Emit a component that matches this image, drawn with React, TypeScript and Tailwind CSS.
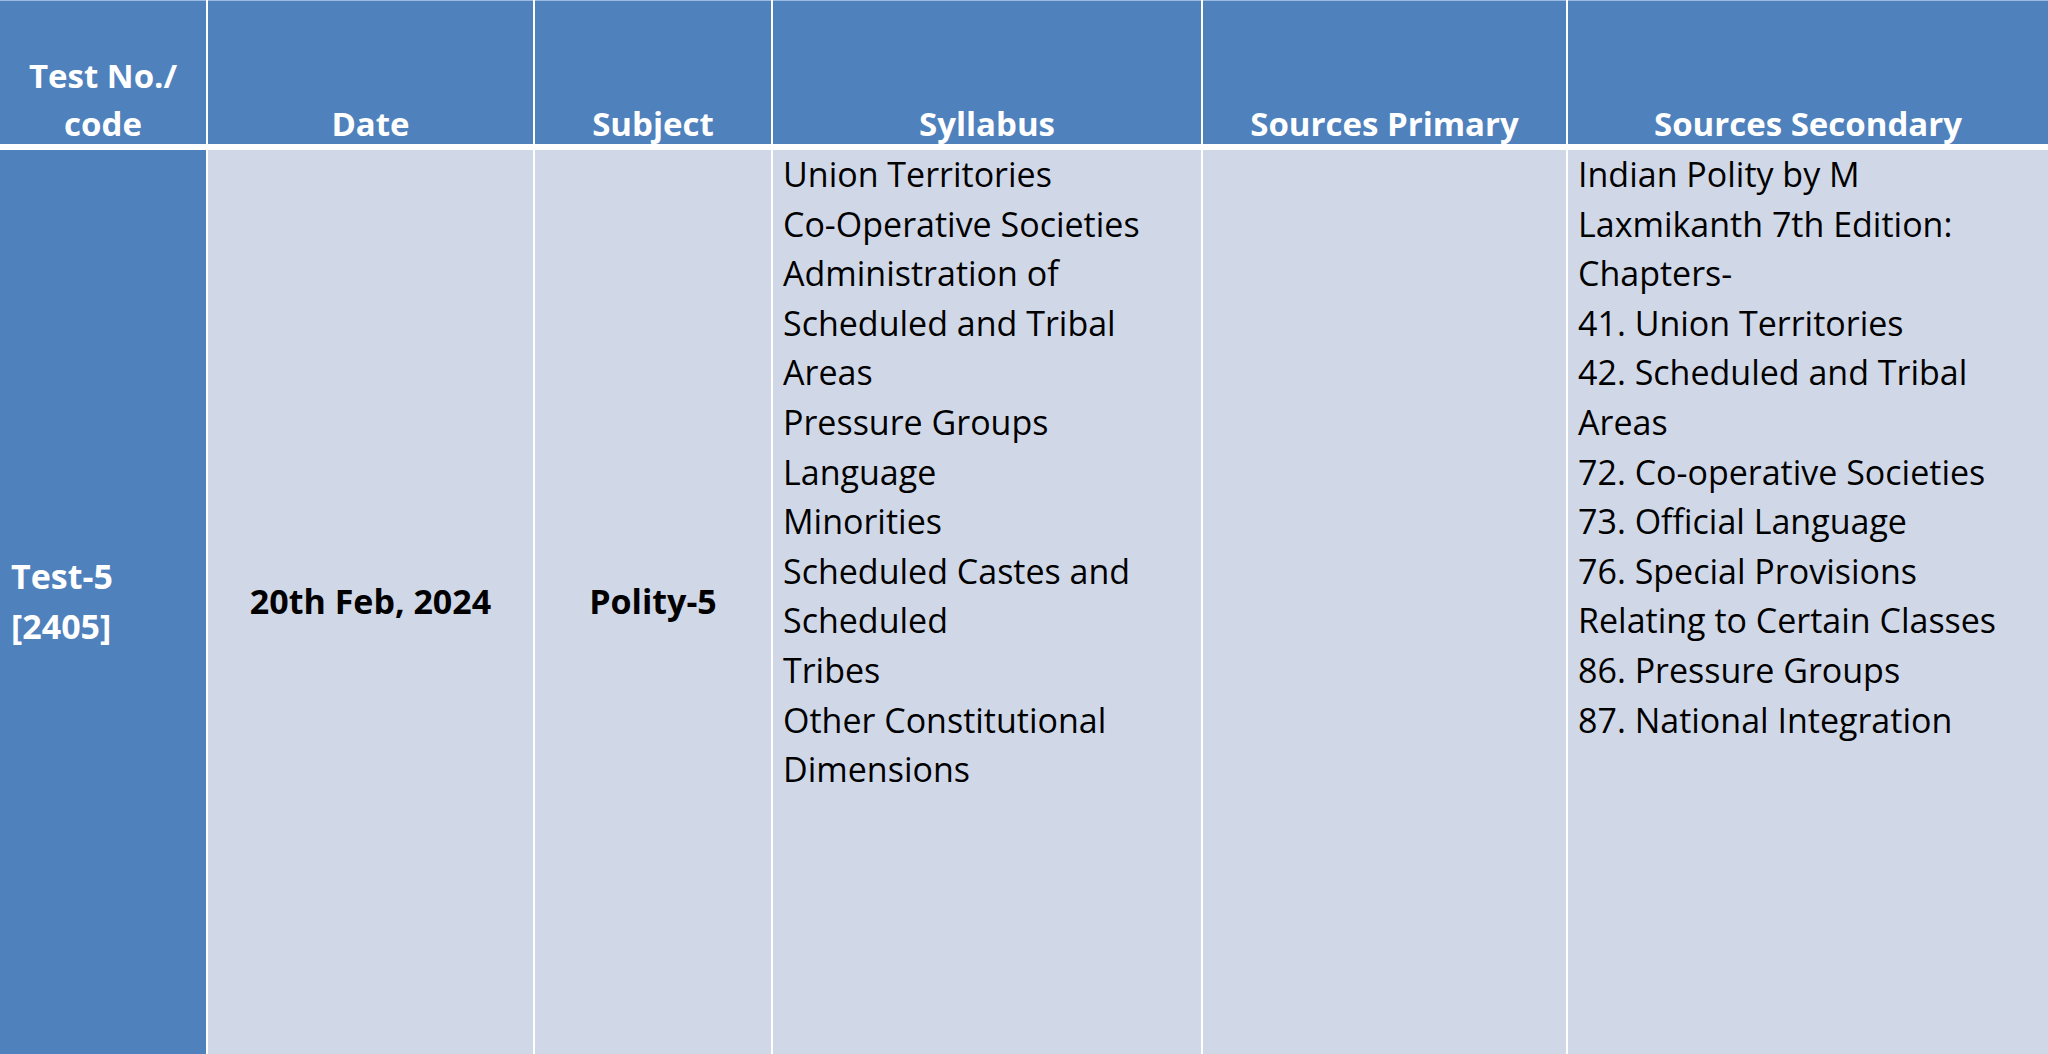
const headers = [
  ["Test No./", "code"],
  ["Date"],
  ["Subject"],
  ["Syllabus"],
  ["Sources Primary"],
  ["Sources Secondary"],
];

const syllabus = [
  "Union Territories",
  "Co-Operative Societies",
  "Administration of",
  "Scheduled and Tribal",
  "Areas",
  "Pressure Groups",
  "Language",
  "Minorities",
  "Scheduled Castes and",
  "Scheduled",
  "Tribes",
  "Other Constitutional",
  "Dimensions",
];

const secondary = [
  "Indian Polity by M",
  "Laxmikanth 7th Edition:",
  "Chapters-",
  "41. Union Territories",
  "42. Scheduled and Tribal",
  "Areas",
  "72. Co-operative Societies",
  "73. Official Language",
  "76. Special Provisions",
  "Relating to Certain Classes",
  "86. Pressure Groups",
  "87. National Integration",
];

function Lines({ lines }: { lines: string[] }) {
  return (
    <div>
      {lines.map((l, i) => (
        <div key={i} className="whitespace-nowrap">
          {l}
        </div>
      ))}
    </div>
  );
}

export default function App() {
  return (
    <div
      className="h-[1054px] w-[2048px] overflow-hidden bg-white text-[34px] leading-[49.6px]"
      style={{ fontFamily: '"Open Sans", "Noto Sans", sans-serif' }}
    >
      <div className="grid h-full grid-cols-[206px_325px_236px_428px_363px_1fr] grid-rows-[144px_1fr] gap-x-[2px] gap-y-[6px]">
        {headers.map((h, i) => (
          <div
            key={i}
            className="flex items-end justify-center border-t border-[#9cbbe0] bg-[#4f81bd] text-center text-[33px] font-bold leading-[48px] text-white"
          >
            <div className="-mb-[4px]">
              <Lines lines={h} />
            </div>
          </div>
        ))}

        <div className="flex items-center bg-[#4f81bd] px-[11px] font-bold text-white">
          <Lines lines={["Test-5", "[2405]"]} />
        </div>
        <div className="flex items-center justify-center bg-[#d0d8e8] font-bold text-black">
          20th Feb, 2024
        </div>
        <div className="flex items-center justify-center bg-[#d0d8e8] font-bold text-black">
          Polity-5
        </div>
        <div className="bg-[#d0d8e8] px-[10px] text-black">
          <Lines lines={syllabus} />
        </div>
        <div className="bg-[#d0d8e8]" />
        <div className="bg-[#d0d8e8] px-[10px] text-black">
          <Lines lines={secondary} />
        </div>
      </div>
    </div>
  );
}
